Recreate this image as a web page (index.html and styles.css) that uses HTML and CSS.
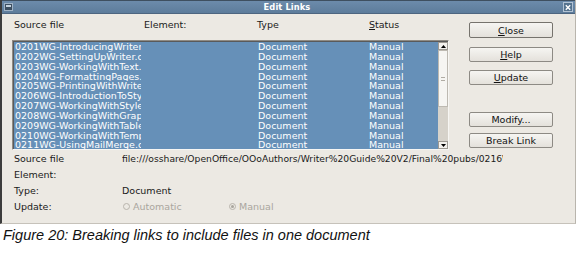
FILE: index.html
```html
<!DOCTYPE html>
<html>
<head>
<meta charset="utf-8">
<link rel="stylesheet" href="styles.css">
</head>
<body>
<div class="window">
  <div class="titlebar">
    <span class="app-icon"><span class="app-icon-bar"></span></span>
    <span class="title">Edit Links</span>
    <span class="close-x"><svg width="9" height="9" viewBox="0 0 9 9"><path d="M2 2 L7 7 M7 2 L2 7" stroke="#fff" stroke-width="1.6" fill="none"/></svg></span>
  </div>
  <div class="body">
    <div class="top">
      <div class="left">
        <div class="header">
          <span class="h1">Source file</span><span class="h2">Element:</span><span class="h3">Type</span><span class="h4"><u>S</u>tatus</span>
        </div>
        <div class="list">
          <div class="rows">
            <div class="row"><span class="c1">0201WG-IntroducingWriter.odt</span><span class="c2"></span><span class="c3">Document</span><span class="c4">Manual</span></div>
            <div class="row"><span class="c1">0202WG-SettingUpWriter.odt</span><span class="c2"></span><span class="c3">Document</span><span class="c4">Manual</span></div>
            <div class="row"><span class="c1">0203WG-WorkingWithText.odt</span><span class="c2"></span><span class="c3">Document</span><span class="c4">Manual</span></div>
            <div class="row"><span class="c1">0204WG-FormattingPages.odt</span><span class="c2"></span><span class="c3">Document</span><span class="c4">Manual</span></div>
            <div class="row"><span class="c1">0205WG-PrintingWithWriter.odt</span><span class="c2"></span><span class="c3">Document</span><span class="c4">Manual</span></div>
            <div class="row"><span class="c1">0206WG-IntroductionToStyles.odt</span><span class="c2"></span><span class="c3">Document</span><span class="c4">Manual</span></div>
            <div class="row"><span class="c1">0207WG-WorkingWithStyles.odt</span><span class="c2"></span><span class="c3">Document</span><span class="c4">Manual</span></div>
            <div class="row"><span class="c1">0208WG-WorkingWithGraphics.odt</span><span class="c2"></span><span class="c3">Document</span><span class="c4">Manual</span></div>
            <div class="row"><span class="c1">0209WG-WorkingWithTables.odt</span><span class="c2"></span><span class="c3">Document</span><span class="c4">Manual</span></div>
            <div class="row"><span class="c1">0210WG-WorkingWithTemplates.odt</span><span class="c2"></span><span class="c3">Document</span><span class="c4">Manual</span></div>
            <div class="row"><span class="c1">0211WG-UsingMailMerge.odt</span><span class="c2"></span><span class="c3">Document</span><span class="c4">Manual</span></div>
          </div>
          <div class="scrollbar">
            <div class="arrow"><svg width="5" height="3" viewBox="0 0 5 3"><path d="M0 3 L2.5 0 L5 3 Z" fill="#000"/></svg></div>
            <div class="thumb"><span class="grip"></span></div>
            <div class="track"></div>
            <div class="arrow"><svg width="5" height="3" viewBox="0 0 5 3"><path d="M0 0 L2.5 3 L5 0 Z" fill="#000"/></svg></div>
          </div>
        </div>
      </div>
      <div class="buttons">
        <button class="btn btn-close"><u>C</u>lose</button>
        <button class="btn btn-help"><u>H</u>elp</button>
        <button class="btn btn-update"><u>U</u>pdate</button>
        <button class="btn btn-modify">Modify...</button>
        <button class="btn btn-break">Break Link</button>
      </div>
    </div>
    <div class="details">
      <span class="label">Source file</span><span class="value value-clip">file:///osshare/OpenOffice/OOoAuthors/Writer%20Guide%20V2/Final%20pubs/0216WG-Indexes.odt</span>
      <span class="label">Element:</span><span class="value"></span>
      <span class="label">Type:</span><span class="value">Document</span>
      <span class="label">Update:</span>
      <span class="value radios">
        <span class="radio radio-auto"><span class="circle"></span>Automatic</span>
        <span class="radio"><span class="circle checked"><span class="dot"></span></span>Manual</span>
      </span>
    </div>
  </div>
</div>
<p class="caption">Figure 20: Breaking links to include files in one document</p>
</body>
</html>
```
FILE: styles.css
```css
* { box-sizing: border-box; }
html, body { margin: 0; padding: 0; background: #ffffff; }
body { font-family: "DejaVu Sans", sans-serif; font-size: 9.5px; color: #1a1a1a; }

.window {
  width: 576px;
  height: 224px;
  border-left: 2px solid #3c3c3c;
  border-right: 1px solid #b9b5ad;
  border-bottom: 1px solid #c6c2ba;
  background: #ece9e3;
  display: flex;
  flex-direction: column;
}

.titlebar {
  height: 14px;
  flex: none;
  background: linear-gradient(#6c8bab, #5d7c9b);
  border-top: 1px solid #3e4f60;
  border-bottom: 1px solid #4d6580;
  display: flex;
  align-items: center;
  position: relative;
  color: #fff;
}
.app-icon {
  width: 9px; height: 8px;
  margin-left: 2px;
  background: #3d4f61;
  border: 1px solid #9fb2c5;
  position: relative;
}
.app-icon-bar { display: block; height: 2px; background: #c6d3df; margin: 1px 1px 0 1px; }
.title {
  flex: 1;
  text-align: center;
  font-size: 8.3px;
  font-weight: bold;
  letter-spacing: 0.1px;
  padding-right: 2px;
}
.close-x {
  width: 10px; height: 10px;
  margin-right: 2px;
  border: 1px solid #b3c3d4;
  background: #55738f;
  display: flex; align-items: center; justify-content: center;
}

.body {
  flex: 1;
  padding-left: 10px;
  display: flex;
  flex-direction: column;
}
.top { display: flex; }
.left { width: 437px; padding-top: 5px; }
.header { display: flex; height: 12px; line-height: 12px; padding-left: 2px; }
.h1 { width: 130px; }
.h2 { width: 113px; }
.h3 { width: 112px; }
.list {
  margin-top: 9px;
  height: 110px;
  border: 1px solid #8f8b84;
  border-right-color: #f7f6f3;
  border-bottom-color: #f7f6f3;
  display: flex;
}
.rows {
  flex: 1;
  border: 1px solid #5a5a5a;
  border-right: none;
  border-bottom: none;
  background: #6690b8;
  overflow: hidden;
  color: #fff;
}
.row { display: flex; height: 9.85px; line-height: 10px; padding-left: 1px; white-space: nowrap; }
.c1 { width: 126px; overflow: hidden; flex: none; }
.c2 { width: 117px; flex: none; }
.c3 { width: 111px; flex: none; }

.scrollbar {
  width: 10px;
  display: flex;
  flex-direction: column;
  border-top: 1px solid #5a5a5a;
  background: #d6d2ca;
}
.arrow {
  height: 8px;
  background: #f3f1ed;
  border: 1px solid #9e9a93;
  display: flex; align-items: center; justify-content: center;
}
.thumb {
  height: 57px;
  background: #f6f5f2;
  border: 1px solid #bdb9b1;
  display: flex; align-items: center; justify-content: center;
}
.grip { width: 4px; height: 4px; border-top: 1px solid #b0aca4; border-bottom: 1px solid #b0aca4; }
.track { flex: 1; }

.buttons {
  margin-left: 20px;
  width: 84px;
  padding-top: 8px;
  display: flex;
  flex-direction: column;
}
.btn {
  font-family: "DejaVu Sans", sans-serif;
  font-size: 9.5px;
  color: #111;
  height: 15px;
  padding: 0;
  line-height: 13px;
  background: linear-gradient(#f6f5f2, #e4e1db);
  border: 1px solid #8d8a84;
  border-radius: 2px;
}
.btn-close { height: 16px; border-color: #76736d; }
.btn-help { margin-top: 9px; }
.btn-update { margin-top: 8px; }
.btn-modify { margin-top: 27px; }
.btn-break { margin-top: 6px; }

.details {
  display: grid;
  grid-template-columns: 108px 1fr;
  grid-auto-rows: 16px;
  align-items: center;
  padding-left: 2px;
}
.value-clip { width: 381px; overflow: hidden; white-space: nowrap; font-size: 9.2px; }
.radios { display: flex; color: #aaa69e; }
.radio { display: flex; align-items: center; }
.radio-auto { width: 106px; }
.circle {
  width: 7px; height: 7px;
  border: 1px solid #b8b4ac;
  border-radius: 50%;
  margin: 0 3px 0 1px;
  display: flex; align-items: center; justify-content: center;
}
.dot { width: 3px; height: 3px; border-radius: 50%; background: #a9a59d; }

.caption {
  margin: 3px 0 0 3px;
  font-family: "Liberation Sans", Arial, sans-serif;
  font-style: italic;
  font-size: 14.5px;
  line-height: 17px;
  color: #111;
}
```
